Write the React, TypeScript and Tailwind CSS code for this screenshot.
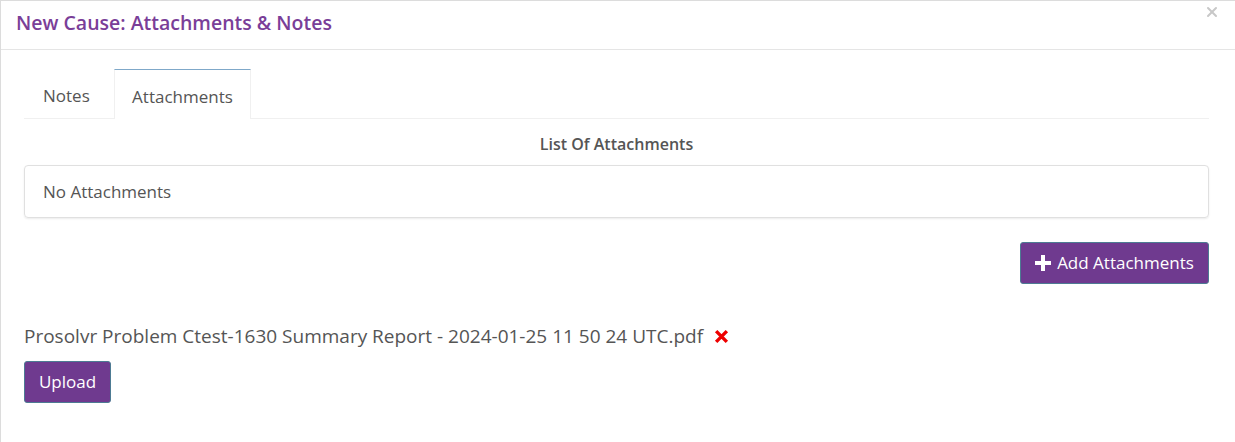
import { X } from "lucide-react";

const font = { fontFamily: "'Open Sans', 'Noto Sans', Arial, sans-serif" };

export default function App() {
  return (
    <div
      className="h-[442px] w-[1235px] overflow-hidden border-l border-t border-[#dcdcdc] bg-white text-[#555]"
      style={font}
    >
      <div className="relative flex h-[49px] items-center border-b border-[#e5e5e5] px-[15px] pb-[4px]">
        <h4 className="text-[19.5px] font-semibold text-[#7a3e98]">New Cause: Attachments &amp; Notes</h4>
        <button className="absolute right-[15px] top-[3px] text-[#c8c8c8]" type="button">
          <X size={16} strokeWidth={3} />
        </button>
      </div>

      <div className="pl-[23px] pr-[26px] pt-[19px]">
        <div className="flex h-[50px] border-b border-[#f0f0f0]">
          <div className="flex w-[90px] items-center pl-[19px] pt-[5px] text-[17px] text-[#555]">Notes</div>
          <div className="-mb-px flex w-[137px] items-center justify-center border-x border-t border-x-[#f0f0f0] border-t-[#7fa8c9] bg-white pt-[5px] text-[17px] text-[#555]">
            Attachments
          </div>
        </div>

        <div className="mt-[13px] text-center text-[16px] font-semibold text-[#555]">List Of Attachments</div>

        <div className="mt-[9px] flex h-[53px] items-center rounded-[4px] border border-[#e0e0e0] px-[18px] text-[17px] text-[#555] shadow-[0_1px_2px_rgba(0,0,0,0.08)]">
          No Attachments
        </div>

        <div className="mt-[24px] flex justify-end">
          <button
            type="button"
            className="flex h-[42px] w-[189px] items-center justify-center gap-[6px] rounded-[3px] border border-[#4d7b93] bg-[#6f3a8f] text-[17px] text-white"
          >
            <svg width="16" height="16" viewBox="0 0 16 16" aria-hidden="true">
              <path d="M6 0h4v6h6v4h-6v6h-4v-6h-6v-4h6z" fill="white" />
            </svg>
            Add Attachments
          </button>
        </div>

        <div className="mt-[39px] flex items-center gap-[11px] text-[19px] leading-[26px] text-[#555]">
          <span>Prosolvr Problem Ctest-1630 Summary Report - 2024-01-25 11 50 24 UTC.pdf</span>
          <svg width="15" height="15" viewBox="0 0 14 14" aria-hidden="true">
            <path d="M2 2l10 10M12 2L2 12" stroke="#ee0000" strokeWidth="3.2" />
          </svg>
        </div>

        <button
          type="button"
          className="mt-[12px] flex h-[42px] w-[87px] items-center justify-center rounded-[3px] border border-[#4d7b93] bg-[#6f3a8f] text-[17px] text-white"
        >
          Upload
        </button>
      </div>
    </div>
  );
}
